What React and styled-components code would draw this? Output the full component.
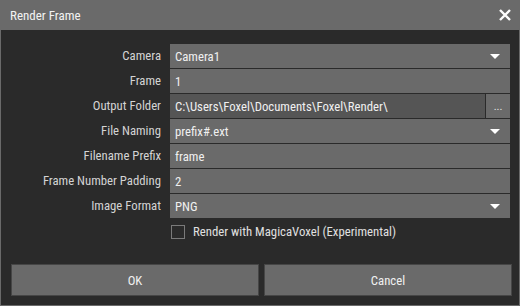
import React from "react";
import styled, { createGlobalStyle } from "styled-components";

const Global = createGlobalStyle`
  html, body { margin: 0; padding: 0; background: #2a2a2a; }
  body {
    font-family: "Roboto Condensed", "DejaVu Sans Condensed", "Liberation Sans Narrow", Roboto, sans-serif;
  }
`;

const Dialog = styled.div`
  width: 520px;
  height: 306px;
  display: flex;
  flex-direction: column;
  background: #2a2a2a;
  box-sizing: border-box;
`;

const TitleBar = styled.div`
  height: 30px;
  flex: none;
  background: #6a6a6a;
  display: flex;
  align-items: center;
  justify-content: space-between;
  padding: 0 8px 0 10px;
  color: #f2f2f2;
  font-size: 13px;
`;

const Close = styled.button`
  border: 0;
  background: none;
  padding: 0;
  width: 14px;
  height: 14px;
  display: flex;
  cursor: pointer;
`;

const Body = styled.div`
  flex: 1;
  border: 1px solid #6a6a6a;
  border-top: 0;
  display: flex;
  flex-direction: column;
  padding: 14px 9px 9px 9px;
`;

const Form = styled.div`
  display: grid;
  grid-template-columns: 151px 340px;
  column-gap: 9px;
  row-gap: 1px;
`;

const Label = styled.div`
  text-align: right;
  color: #d4d4d4;
  font-size: 12.75px;
  line-height: 24px;
  height: 24px;
  white-space: nowrap;
`;

const Field = styled.div`
  height: 24px;
  background: ${(p) => (p.$dark ? "#555555" : "#6a6a6a")};
  display: flex;
  align-items: center;
  padding-left: 5px;
  color: #f0f0f0;
  font-size: 12.75px;
  position: relative;
  flex: 1;
  white-space: nowrap;
  overflow: hidden;
`;

const FieldRow = styled.div`
  display: flex;
  gap: 1px;
`;

const Caret = styled.span`
  position: absolute;
  right: 10px;
  top: 10px;
  width: 0;
  height: 0;
  border-left: 5px solid transparent;
  border-right: 5px solid transparent;
  border-top: 5px solid #ffffff;
`;

const Browse = styled.div`
  width: 24px;
  height: 24px;
  background: #6a6a6a;
  color: #e8e8e8;
  font-size: 11px;
  display: flex;
  align-items: center;
  justify-content: center;
`;

const CheckRow = styled.label`
  grid-column: 2;
  display: flex;
  align-items: center;
  gap: 8px;
  margin-top: 5px;
  color: #e0e0e0;
  font-size: 12.75px;
`;

const Box = styled.span`
  width: 12px;
  height: 12px;
  border: 1px solid #7a7a7a;
  margin-left: 1px;
`;

const Buttons = styled.div`
  margin-top: auto;
  display: grid;
  grid-template-columns: 248px 248px;
  column-gap: 5px;
  padding: 0 0 0 1px;
`;

const Button = styled.button`
  height: 32px;
  background: #6a6a6a;
  border: 1px solid #464646;
  color: #f0f0f0;
  font-family: inherit;
  font-size: 12.75px;
  cursor: pointer;
`;

const Dropdown = ({ value }) => (
  <Field>
    {value}
    <Caret />
  </Field>
);

const App = () => (
  <>
    <Global />
    <Dialog>
      <TitleBar>
        <span>Render Frame</span>
        <Close>
          <svg width="14" height="14" viewBox="0 0 14 14">
            <path d="M2 2 L12 12 M12 2 L2 12" stroke="#fff" strokeWidth="2.4" />
          </svg>
        </Close>
      </TitleBar>
      <Body>
        <Form>
          <Label>Camera</Label>
          <Dropdown value="Camera1" />
          <Label>Frame</Label>
          <Field>1</Field>
          <Label>Output Folder</Label>
          <FieldRow>
            <Field $dark>C:\Users\Foxel\Documents\Foxel\Render\</Field>
            <Browse>...</Browse>
          </FieldRow>
          <Label>File Naming</Label>
          <Dropdown value="prefix#.ext" />
          <Label>Filename Prefix</Label>
          <Field>frame</Field>
          <Label>Frame Number Padding</Label>
          <Field>2</Field>
          <Label>Image Format</Label>
          <Dropdown value="PNG" />
          <CheckRow>
            <Box />
            Render with MagicaVoxel (Experimental)
          </CheckRow>
        </Form>
        <Buttons>
          <Button>OK</Button>
          <Button>Cancel</Button>
        </Buttons>
      </Body>
    </Dialog>
  </>
);

export default App;
